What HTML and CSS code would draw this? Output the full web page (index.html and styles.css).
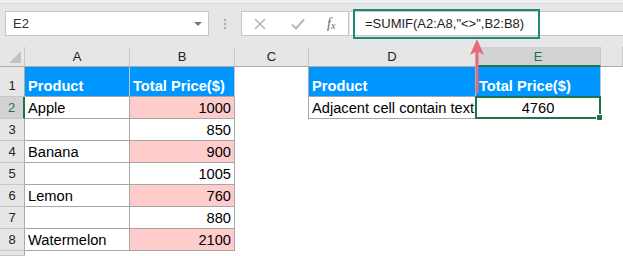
FILE: index.html
```html
<!DOCTYPE html>
<html>
<head>
<meta charset="utf-8">
<link rel="stylesheet" href="styles.css">
</head>
<body>
<div class="toolbar">
  <div class="namebox"><span>E2</span><i class="dd"></i></div>
  <div class="dots"><i></i><i></i><i></i></div>
  <div class="btns">
    <svg class="ic-x" width="12" height="12" viewBox="0 0 12 12"><path d="M1 1L11 11M11 1L1 11" stroke="#b8b8b8" stroke-width="1.6" fill="none"/></svg>
    <svg class="ic-ok" width="14" height="12" viewBox="0 0 14 12"><path d="M1 6.5L5 10.5L13 1.5" stroke="#b8b8b8" stroke-width="2" fill="none"/></svg>
    <span class="fx">f<sub>x</sub></span>
  </div>
  <div class="formula">=SUMIF(A2:A8,"&lt;&gt;",B2:B8)</div>
</div>
<div class="fbox"></div>
<div class="sheet">
  <div class="corner"><i></i></div>
  <div class="ch">A</div><div class="ch">B</div><div class="ch">C</div><div class="ch">D</div><div class="ch sel">E</div><div class="ch"></div>

  <div class="rh">1</div>
  <div class="c g hd">Product</div><div class="c g hd">Total Price($)</div><div class="c cr"></div><div class="c g hd">Product</div><div class="c g hd">Total Price($)</div><div class="c"></div>

  <div class="rh sel">2</div>
  <div class="c g">Apple</div><div class="c g pk num">1000</div><div class="c cr"></div><div class="c g">Adjacent cell contain text</div><div class="c g ctr active">4760<span class="selbox"><i></i></span></div><div class="c"></div>

  <div class="rh">3</div>
  <div class="c g"></div><div class="c g num">850</div><div class="c"></div><div class="c"></div><div class="c"></div><div class="c"></div>

  <div class="rh">4</div>
  <div class="c g">Banana</div><div class="c g pk num">900</div><div class="c"></div><div class="c"></div><div class="c"></div><div class="c"></div>

  <div class="rh">5</div>
  <div class="c g"></div><div class="c g num">1005</div><div class="c"></div><div class="c"></div><div class="c"></div><div class="c"></div>

  <div class="rh">6</div>
  <div class="c g">Lemon</div><div class="c g pk num">760</div><div class="c"></div><div class="c"></div><div class="c"></div><div class="c"></div>

  <div class="rh">7</div>
  <div class="c g"></div><div class="c g num">880</div><div class="c"></div><div class="c"></div><div class="c"></div><div class="c"></div>

  <div class="rh">8</div>
  <div class="c g">Watermelon</div><div class="c g pk num">2100</div><div class="c"></div><div class="c"></div><div class="c"></div><div class="c"></div>

  <div class="rh"></div>
  <div class="c"></div><div class="c"></div><div class="c"></div><div class="c"></div><div class="c"></div><div class="c"></div>
</div>
<svg class="arrow" width="18" height="60" viewBox="0 0 18 60">
  <line x1="9" y1="12" x2="9" y2="57" stroke="#e66b7b" stroke-width="3"/>
  <polygon points="9,3 16,19 9,15 2,19" fill="#e66b7b"/>
</svg>
</body>
</html>
```
FILE: styles.css
```css
html, body {
  margin: 0;
  padding: 0;
}
body {
  width: 623px;
  height: 256px;
  overflow: hidden;
  position: relative;
  background: #fff;
  font-family: "Liberation Sans", Arial, sans-serif;
}
.toolbar {
  height: 47px;
  box-sizing: border-box;
  background: #e6e6e6;
  border-top: 3px solid #eeeeee;
  box-shadow: inset 0 1px 0 #dadada;
  padding-top: 8px;
  display: flex;
  align-items: flex-start;
}
.namebox {
  margin-left: 5px;
  width: 204px;
  height: 25px;
  box-sizing: border-box;
  background: #fff;
  border: 1px solid #c6c6c6;
  display: flex;
  align-items: center;
  padding-left: 7px;
  font-size: 13px;
  color: #333;
}
.namebox .dd {
  margin-left: auto;
  margin-right: 6px;
  width: 0;
  height: 0;
  border-left: 4px solid transparent;
  border-right: 4px solid transparent;
  border-top: 4px solid #777;
}
.dots {
  width: 32px;
  height: 25px;
  display: flex;
  flex-direction: column;
  align-items: center;
  justify-content: center;
  gap: 2px;
}
.dots i {
  width: 2px;
  height: 2px;
  background: #a8a8a8;
}
.btns {
  width: 108px;
  height: 25px;
  box-sizing: border-box;
  background: #fff;
  border: 1px solid #c6c6c6;
  position: relative;
  display: flex;
  align-items: center;
}
.ic-x {
  margin-left: 12px;
}
.ic-ok {
  margin-left: 25px;
}
.fx {
  margin-left: 22px;
  font-family: "Liberation Serif", serif;
  font-style: italic;
  font-size: 14px;
  color: #666;
  line-height: 1;
}
.fx sub {
  font-size: 10px;
  vertical-align: -1px;
}
.formula {
  flex: 1;
  margin-left: 1px;
  height: 25px;
  box-sizing: border-box;
  background: #fff;
  border-top: 1px solid #c6c6c6;
  border-bottom: 1px solid #c6c6c6;
  display: flex;
  align-items: center;
  padding-left: 15px;
  font-size: 13px;
  color: #222;
}
.fbox {
  position: absolute;
  left: 353px;
  top: 9px;
  width: 187px;
  height: 30px;
  box-sizing: border-box;
  border: 2px solid #1f8a7a;
}
.sheet {
  display: grid;
  grid-template-columns: 25px 105px 105px 74px 167px 125px 22px;
  grid-template-rows: 20px 30px repeat(7, 22px) 5px;
}
.sheet > div {
  box-sizing: border-box;
}
.corner {
  background: #e6e6e6;
  border-right: 1px solid #c8c8c8;
  border-bottom: 1px solid #ababab;
  position: relative;
}
.corner i {
  position: absolute;
  right: 3px;
  bottom: 3px;
  width: 0;
  height: 0;
  border-left: 12px solid transparent;
  border-bottom: 12px solid #c2c2c2;
}
.ch {
  background: #e6e6e6;
  border-right: 1px solid #c8c8c8;
  border-bottom: 1px solid #ababab;
  display: flex;
  align-items: center;
  justify-content: center;
  font-size: 13px;
  color: #222;
}
.ch.sel {
  background: #d2d2d2;
  color: #217346;
  border-bottom: 2px solid #217346;
}
.rh {
  background: #e6e6e6;
  border-right: 1px solid #ababab;
  border-bottom: 1px solid #c8c8c8;
  display: flex;
  align-items: flex-end;
  justify-content: center;
  padding-bottom: 3px;
  font-size: 13px;
  color: #222;
}
.rh.sel {
  background: #d2d2d2;
  color: #217346;
  border-right: 2px solid #217346;
}
.c {
  display: flex;
  align-items: flex-end;
  padding: 0 3px 2px 3px;
  font-size: 11pt;
  color: #000;
  white-space: nowrap;
  position: relative;
}
.g {
  border-right: 1px solid #a6a6a6;
  border-bottom: 1px solid #a6a6a6;
}
.cr {
  border-right: 1px solid #a6a6a6;
}
.hd {
  background: #0096ff;
  color: #fff;
  font-weight: bold;
  border-right-color: #b8c8d8;
  border-bottom-color: #a6a6a6;
}
.pk {
  background: #ffcccc;
}
.num {
  justify-content: flex-end;
}
.ctr {
  justify-content: center;
}
.selbox {
  position: absolute;
  left: -1px;
  top: -1px;
  right: -1px;
  bottom: -1px;
  border: 2px solid #217346;
}
.selbox i {
  position: absolute;
  right: -4px;
  bottom: -4px;
  width: 5px;
  height: 5px;
  background: #217346;
  border: 1px solid #fff;
}
.arrow {
  position: absolute;
  left: 468px;
  top: 36px;
}
```
